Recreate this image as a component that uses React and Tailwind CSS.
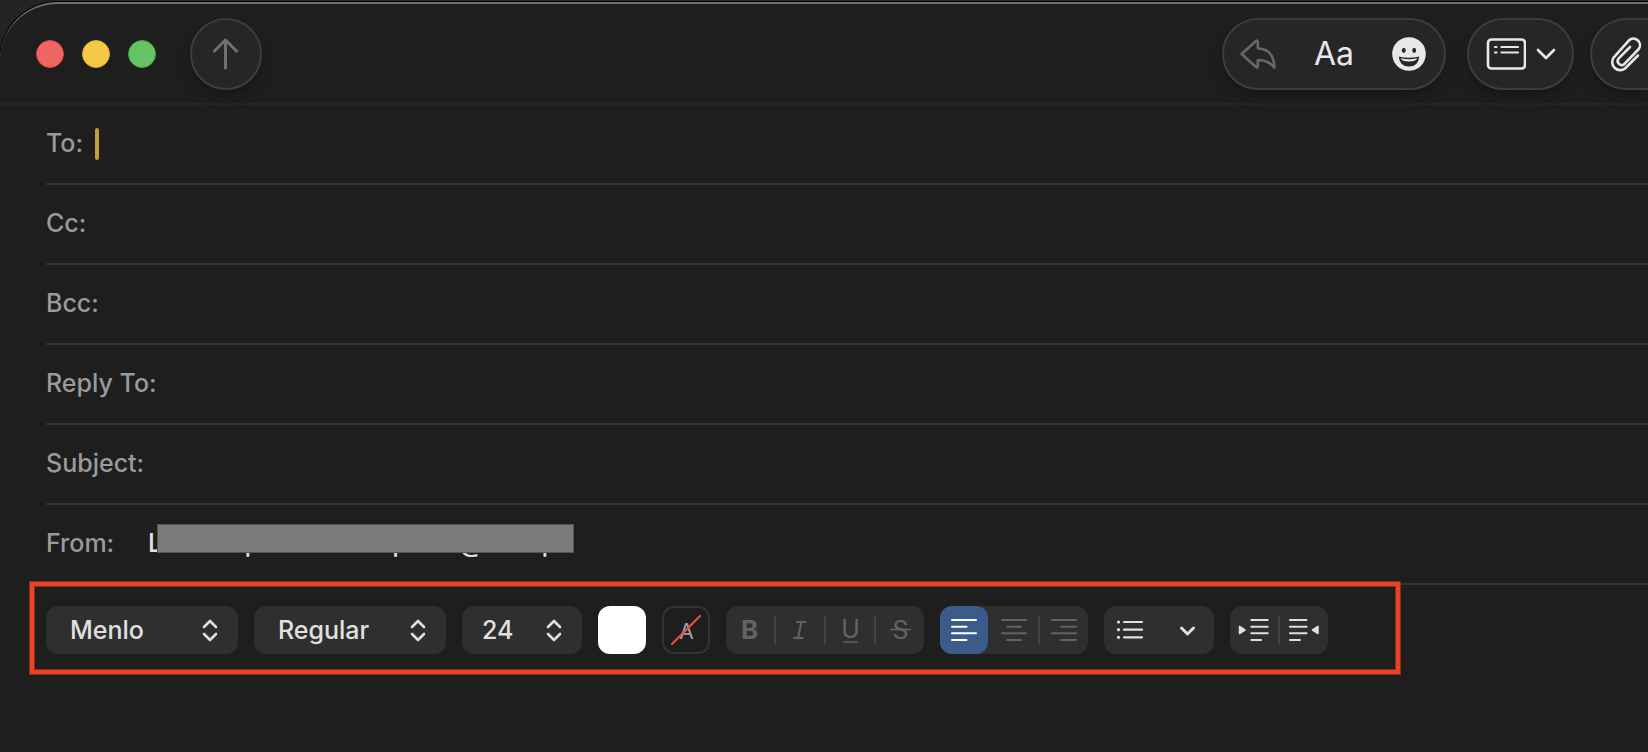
import React, { useState } from 'react';

const FIELDS = [
  { id: 'to', label: 'To:' },
  { id: 'cc', label: 'Cc:' },
  { id: 'bcc', label: 'Bcc:' },
  { id: 'replyTo', label: 'Reply To:' },
  { id: 'subject', label: 'Subject:' },
];

const GLASS = 'h-18 shrink-0 rounded-full border-2 border-[#3d3d3d] bg-[#262626] shadow-lg shadow-black/20';

const Divider = ({ hidden }) => (
  <span className={hidden ? 'h-7 w-0.5' : 'h-7 w-0.5 bg-[#444444]'} />
);

const Popup = ({ label, value, options, className, inset, onChange }) => (
  <div className={`relative h-12 shrink-0 ${className}`}>
    <select
      aria-label={label}
      value={value}
      onChange={(e) => onChange(e.target.value)}
      className={`h-full w-full appearance-none rounded-xl bg-[#2f2f2f] pt-0.5 text-[25px] font-medium text-[#e0e0e0] outline-none ${inset}`}
    >
      {options.map((option) => (
        <option key={option}>{option}</option>
      ))}
    </select>
    <svg className="pointer-events-none absolute top-3 right-5 h-6 w-4" viewBox="0 0 16 24" fill="none" stroke="#e0e0e0" strokeWidth="2.6" strokeLinecap="round" strokeLinejoin="round">
      <path d="M2 9 8 3l6 6M2 16l6 6 6-6" />
    </svg>
  </div>
);

// Every tool button is a 48px cell, so the icons are drawn on a 48 grid
const ToolButton = ({ label, active, children }) => (
  <button
    type="button"
    aria-label={label}
    className={`h-12 w-12 rounded-xl ${active ? 'bg-[#3b5c8a] text-white' : ''}`}
  >
    <svg className="h-12 w-12" viewBox="0 0 48 48" fill="none" stroke="currentColor" strokeWidth="2" strokeLinecap="round" strokeLinejoin="round">
      {children}
    </svg>
  </button>
);

const Header = () => (
  <header className="flex h-[101px] items-start justify-between border-b-2 border-[#252525] pt-3.5">
    <div className="flex items-center pl-9">
      <div className="flex gap-[18px]">
        <button type="button" aria-label="Close" className="size-7 rounded-full border border-[#e0443e] bg-[#ee6664]" />
        <button type="button" aria-label="Minimize" className="size-7 rounded-full border border-[#e0a93a] bg-[#f4c944]" />
        <button type="button" aria-label="Zoom" className="size-7 rounded-full border border-[#3fa73a] bg-[#65c466]" />
      </div>
      <button type="button" aria-label="Send" className={`${GLASS} ml-[34px] flex w-18 items-center justify-center`}>
        <svg className="h-8 w-7" viewBox="0 0 28 32" fill="none" stroke="#707070" strokeWidth="3" strokeLinecap="round" strokeLinejoin="round">
          <path d="M13.5 30V2M2.5 13 13.5 2l11 11" />
        </svg>
      </button>
    </div>

    <div className="flex">
      <div className={`${GLASS} mr-[21px] flex w-56 items-center justify-between pr-[18px] pl-4`}>
        <button type="button" aria-label="Reply">
          <svg className="h-[30px] w-9" viewBox="0 0 36 30" fill="none" stroke="#686868" strokeWidth="2.6" strokeLinejoin="round">
            <path d="M1.6 15 16 2Q17.8 .6 17.8 3V9.3Q34.3 10.6 34.3 28.6 28.6 21 17.8 21V27Q17.8 29.4 16 28Z" />
          </svg>
        </button>
        <button type="button" aria-label="Format" className="text-[32px] leading-none text-[#e8e8e8]">Aa</button>
        <button type="button" aria-label="Emoji">
          <svg className="size-[34px]" viewBox="0 0 34 34">
            <circle cx="17" cy="17" r="16.8" fill="#e8e8e8" />
            <ellipse cx="11.8" cy="13.3" rx="1.9" ry="2.6" fill="#262626" />
            <ellipse cx="22.2" cy="13.3" rx="1.9" ry="2.6" fill="#262626" />
            <path d="M6.8 19.4Q17 22.2 27.2 19.4 26.4 29.4 17 29.4 7.6 29.4 6.8 19.4Z" fill="#262626" />
            <path d="M8.8 21.2Q17 23.4 25.2 21.2 24 24.4 17 24.4 10 24.4 8.8 21.2Z" fill="#e8e8e8" />
          </svg>
        </button>
      </div>
      <button type="button" aria-label="Header fields" className={`${GLASS} mr-4 flex w-[107px] items-center justify-center gap-2.5`}>
        <svg className="h-8 w-10" viewBox="0 0 40 32" fill="none" stroke="#e8e8e8" strokeWidth="2.6" strokeLinecap="round">
          <rect x="2" y="1.5" width="37" height="29" rx="3.5" />
          <path d="M9 9h1.5M15.5 9H32M9 14.5h1.5M15.5 14.5H32" strokeWidth="2.2" />
        </svg>
        <svg className="h-3 w-5" viewBox="0 0 20 12" fill="none" stroke="#e8e8e8" strokeWidth="2.6" strokeLinecap="round" strokeLinejoin="round">
          <path d="m2 2 8 8 8-8" />
        </svg>
      </button>
      <button type="button" aria-label="Attach" className="flex h-18 w-[58px] items-center rounded-l-full border-2 border-r-0 border-[#3d3d3d] bg-[#262626] pl-[18px] shadow-lg shadow-black/20">
        <svg className="h-9 w-8" viewBox="0 0 32 36" fill="none" stroke="#e8e8e8" strokeWidth="2.6" strokeLinecap="round" strokeLinejoin="round">
          <path d="M28 19.5 15 32.500A8 8 0 0 1 3.8 21.3L19 4.3A6.6 6.6 0 0 1 28.8 13L14.2 28.2A4 4 0 0 1 8.5 22.7L20 11" />
        </svg>
      </button>
    </div>
  </header>
);

const FormatBar = () => {
  const [font, setFont] = useState('Menlo');
  const [style, setStyle] = useState('Regular');
  const [size, setSize] = useState('24');

  return (
    <div className="relative -mt-[3px] ml-[30px] flex w-fit gap-4 border-4 border-[#ea4226] pt-5 pr-[68px] pb-4 pl-3 ring-1 ring-[#8a2f1e] inset-ring-1 inset-ring-[#8a2f1e]">
      <Popup label="Font" value={font} options={['Menlo', 'Helvetica', 'Times']} className="w-48" inset="pl-6" onChange={setFont} />
      <Popup label="Typeface" value={style} options={['Regular', 'Bold', 'Italic']} className="w-48" inset="pl-6" onChange={setStyle} />
      <Popup label="Size" value={size} options={['12', '18', '24', '36']} className="w-30" inset="pl-5" onChange={setSize} />

      <button type="button" aria-label="Text color" className="size-12 rounded-xl bg-white" />
      <button type="button" aria-label="Background color" className="size-12 rounded-xl border-2 border-[#333333]">
        <svg className="size-11" viewBox="2 2 44 44">
          <text x="24.5" y="33" textAnchor="middle" fontSize="21" fill="#a0a0a0">A</text>
          <path d="M10 38 38 10" stroke="#e5504b" strokeWidth="2.2" strokeLinecap="round" />
        </svg>
      </button>

      <div className="flex items-center rounded-xl bg-[#2f2f2f] text-[#636363]">
        <ToolButton label="Bold">
          <text x="23.5" y="33" textAnchor="middle" fontSize="26" fontWeight="700" fill="currentColor" stroke="none">B</text>
        </ToolButton>
        <Divider />
        <ToolButton label="Italic">
          <path d="M21 16H29.500M18 32H26.5M25.3 16 22.2 32" />
        </ToolButton>
        <Divider />
        <ToolButton label="Underline">
          <text x="24.5" y="32" textAnchor="middle" fontSize="25" fill="currentColor" stroke="none">U</text>
          <path d="M18 36H31" strokeWidth="1.6" />
        </ToolButton>
        <Divider />
        <ToolButton label="Strikethrough">
          <text x="24.5" y="33" textAnchor="middle" fontSize="25" fill="currentColor" stroke="none">S</text>
          <path d="M15 23.5H34.5" strokeWidth="1.6" />
        </ToolButton>
      </div>

      <div className="flex items-center rounded-xl bg-[#2f2f2f] text-[#636363]">
        <ToolButton label="Align left" active>
          <path d="M12 14H36M12 20.7H26.5M12 27.3H36M12 34H26.5" />
        </ToolButton>
        <Divider hidden />
        <ToolButton label="Align center">
          <path d="M12 14H36M17 20.7H31M12 27.3H36M17 34H31" />
        </ToolButton>
        <Divider />
        <ToolButton label="Align right">
          <path d="M12 14H36M21.3 20.7H36M12 27.3H36M21.3 34H36" />
        </ToolButton>
      </div>

      <button type="button" aria-label="List" className="rounded-xl bg-[#2f2f2f]">
        <svg className="h-12 w-[110px]" viewBox="0 0 110 48" fill="none" stroke="#e0e0e0" strokeLinecap="round" strokeLinejoin="round">
          <path d="M20 16H38M20 23.7H38M20 31.3H38" strokeWidth="2.2" />
          <path d="M14.5 16h.01M14.5 23.7h.01M14.5 31.3h.01" strokeWidth="3.2" />
          <path d="m77.5 22 6 6 6-6" strokeWidth="3" />
        </svg>
      </button>

      <div className="flex items-center rounded-xl bg-[#2f2f2f] text-[#e0e0e0]">
        <ToolButton label="Increase indent">
          <path d="M21.3 14H37.7M21.3 20.7H37.7M21.3 27.3H37.7M21.3 34H31" />
          <path d="M9.5 20.5v7L15 24Z" fill="currentColor" strokeWidth="1.5" />
        </ToolButton>
        <Divider />
        <ToolButton label="Decrease indent">
          <path d="M10 14H26.5M10 20.7H26.5M10 27.3H26.5M10 34H20" />
          <path d="M38 20.5v7L32.5 24Z" fill="currentColor" strokeWidth="1.5" />
        </ToolButton>
      </div>
    </div>
  );
};

const App = () => {
  return (
    <div className="flex min-h-screen flex-col overflow-hidden bg-[#242424] pt-0.5 font-['Inter',sans-serif]">
      <div className="flex-1 rounded-tl-[58px] border-t-2 border-[#6e6e6e] bg-[#1e1e1e] ring-1 ring-black">
        <Header />

        <form className="ml-[46px] text-[25px] font-medium text-[#9a9a9a]">
          {FIELDS.map(({ id, label }) => (
            <div key={id} className="flex h-20 items-center border-b-2 border-[#333333]">
              <label htmlFor={id}>{label}</label>
              {id === 'to' && <span className="ml-3 h-8 w-1 rounded-full bg-[#c39d3c]" />}
              <input id={id} type="text" className="h-full min-w-0 flex-1 bg-transparent text-[#e0e0e0] caret-[#c39d3c] outline-none" />
            </div>
          ))}
          <div className="flex h-20 items-center border-b-2 border-[#333333]">
            <span className="w-[102px]">From:</span>
            <div className="relative text-[#e0e0e0]">
              {/* sender stays masked, only the first letter is readable */}
              <span aria-hidden="true">Loooi oqoooor – looqoooo@oooilpi</span>
              <span className="absolute -top-px left-[9px] h-[29px] w-[417px] border border-[#555555] bg-[#7b7b7b]" />
            </div>
          </div>
        </form>

        <FormatBar />
      </div>
    </div>
  );
};

export default App;
